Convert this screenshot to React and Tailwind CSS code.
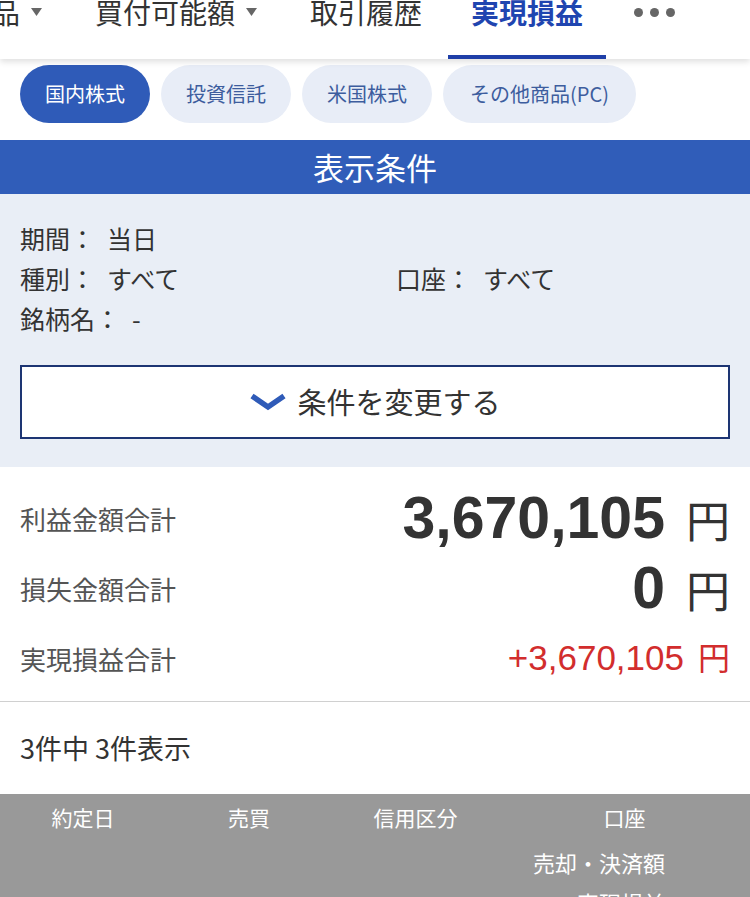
import React from "react";

const JP = { fontFamily: '"Noto Sans CJK JP", "Noto Sans", sans-serif' };
const NUM = { fontFamily: '"Liberation Sans", Arial, "Noto Sans CJK JP", sans-serif' };

function Tri() {
  return (
    <svg width="11" height="8" viewBox="0 0 11 8" className="inline-block">
      <path d="M0 0 L11 0 L5.5 8 Z" fill="#666" />
    </svg>
  );
}

function Chevron() {
  return (
    <svg width="38" height="20" viewBox="0 0 38 20">
      <path d="M3 4 L19 15 L35 4" fill="none" stroke="#2f5bb8" strokeWidth="5.5" strokeLinecap="butt" strokeLinejoin="miter" />
    </svg>
  );
}

function Cond({ label, value, className = "" }) {
  return (
    <div className={"flex " + className}>
      <span>{label}</span>
      <span className="ml-[12px]">{value}</span>
    </div>
  );
}

export default function App() {
  return (
    <div className="w-[750px] h-[897px] overflow-hidden bg-white text-[#333]" style={JP}>
      {/* Top nav */}
      <div className="relative h-[59px] bg-white shadow-[0_3px_6px_rgba(0,0,0,0.12)] z-10 overflow-hidden">
        <div className="flex items-start -mt-[8px] h-[67px] text-[28px] leading-[40px] text-[#333]">
          <div className="flex items-center gap-[11px] -ml-[8px] h-[40px]">
            <span>品</span>
            <Tri />
          </div>
          <div className="flex items-center gap-[11px] ml-[53px] h-[40px]">
            <span>買付可能額</span>
            <Tri />
          </div>
          <div className="ml-[53px] h-[40px]">取引履歴</div>
          <div className="ml-[26px] flex flex-col w-[158px] h-[67px]">
            <div className="h-[63px] text-center font-bold text-[#1f45b0]">実現損益</div>
            <div className="h-[4px] bg-[#1f3fa8]" />
          </div>
          <div className="ml-[28px] h-[40px] flex items-center gap-[7px]">
            <span className="w-[9px] h-[9px] rounded-full bg-[#666]" />
            <span className="w-[9px] h-[9px] rounded-full bg-[#666]" />
            <span className="w-[9px] h-[9px] rounded-full bg-[#666]" />
          </div>
        </div>
      </div>

      {/* Pills */}
      <div className="flex gap-[11px] px-[20px] pt-[6px] pb-[17px] text-[20px]">
        <div className="w-[130px] h-[58px] rounded-full bg-[#2f5bb8] text-white flex items-center justify-center">国内株式</div>
        <div className="w-[130px] h-[58px] rounded-full bg-[#e8edf7] text-[#3d5d9e] flex items-center justify-center">投資信託</div>
        <div className="w-[130px] h-[58px] rounded-full bg-[#e8edf7] text-[#3d5d9e] flex items-center justify-center">米国株式</div>
        <div className="w-[193px] h-[58px] rounded-full bg-[#e8edf7] text-[#3d5d9e] flex items-center justify-center">その他商品(PC)</div>
      </div>

      {/* Header band */}
      <div className="h-[54px] bg-[#305db9] text-white text-[31px] flex items-center justify-center">表示条件</div>

      {/* Conditions */}
      <div className="bg-[#e9eef6] px-[20px] pt-[24px] pb-[28px]">
        <div className="text-[25px] leading-[40px] text-[#333]">
          <Cond label="期間：" value="当日" />
          <div className="flex">
            <Cond label="種別：" value="すべて" className="w-[376px]" />
            <Cond label="口座：" value="すべて" />
          </div>
          <Cond label="銘柄名：" value="-" />
        </div>
        <div className="mt-[27px] h-[74px] border-2 border-[#1d3573] bg-white flex items-center justify-center gap-[10px]">
          <Chevron />
          <span className="text-[29px] text-[#333]">条件を変更する</span>
        </div>
      </div>

      {/* Summary */}
      <div className="px-[20px] pt-[16px] border-b border-[#d0d0d0] h-[235px]">
        <div className="flex items-center justify-between h-[70px]">
          <span className="text-[26px] text-[#555]">利益金額合計</span>
          <span className="flex items-baseline gap-[21px]">
            <span className="text-[59px] font-bold text-[#333]" style={NUM}>3,670,105</span>
            <span className="text-[44px] text-[#333]">円</span>
          </span>
        </div>
        <div className="flex items-center justify-between h-[70px]">
          <span className="text-[26px] text-[#555]">損失金額合計</span>
          <span className="flex items-baseline gap-[21px]">
            <span className="text-[59px] font-bold text-[#333]" style={NUM}>0</span>
            <span className="text-[44px] text-[#333]">円</span>
          </span>
        </div>
        <div className="flex items-center justify-between h-[70px]">
          <span className="text-[26px] text-[#555]">実現損益合計</span>
          <span className="flex items-baseline gap-[14px] text-[#d22d2d]">
            <span className="text-[35px]" style={NUM}>+3,670,105</span>
            <span className="text-[32px]">円</span>
          </span>
        </div>
      </div>

      {/* Count */}
      <div className="h-[92px] px-[20px] flex items-center text-[27px] text-[#333]">3件中 3件表示</div>

      {/* Table header */}
      <div className="bg-[#999999] text-white text-[21px]">
        <div className="grid grid-cols-[166px_166px_167px_251px] h-[48px] items-center text-center">
          <div>約定日</div>
          <div>売買</div>
          <div>信用区分</div>
          <div>口座</div>
        </div>
        <div className="h-[40px] flex items-center justify-end pr-[85px] text-[22px]">売却・決済額</div>
        <div className="h-[40px] flex items-center justify-end pr-[85px] text-[22px]">実現損益</div>
      </div>
    </div>
  );
}
